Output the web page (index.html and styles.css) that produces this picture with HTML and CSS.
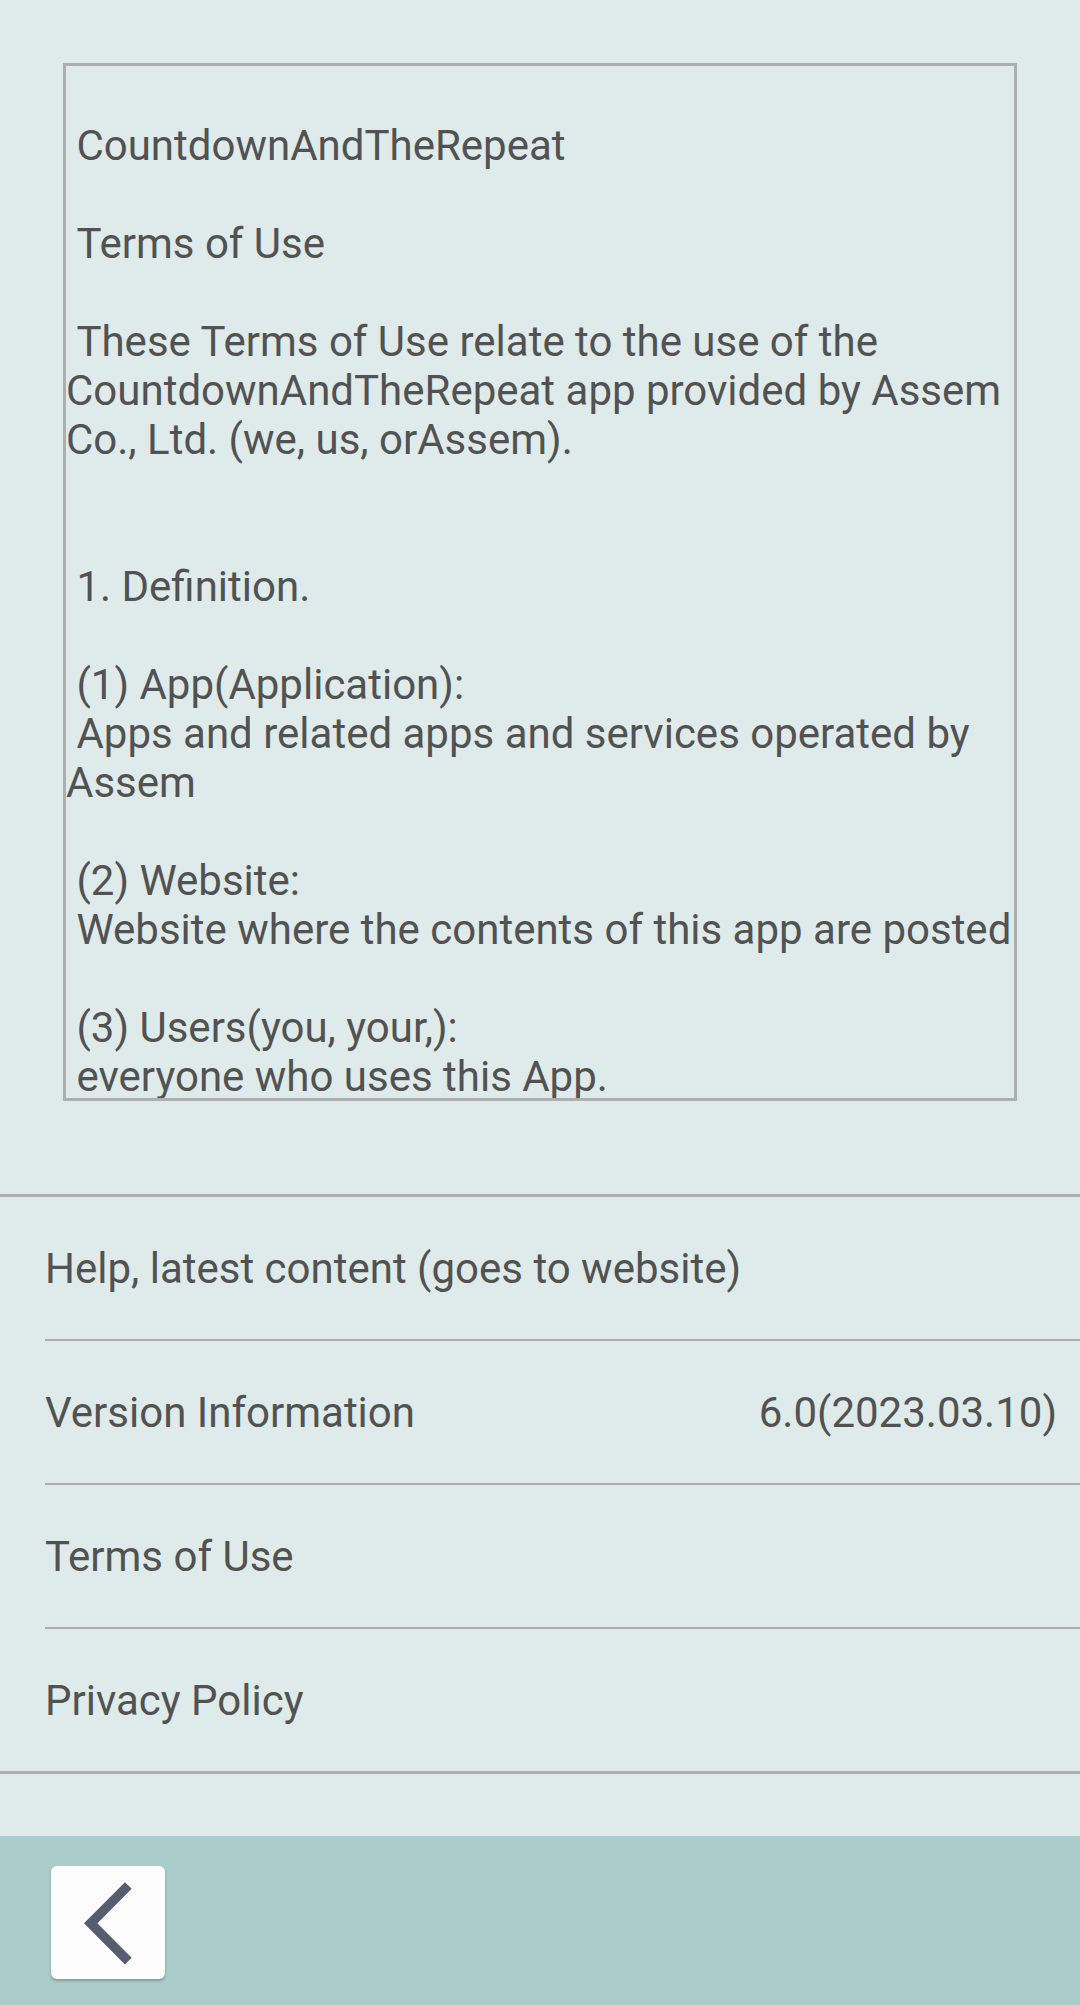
FILE: index.html
```html
<!DOCTYPE html>
<html lang="en">
<head>
    <meta charset="UTF-8">
    <meta name="viewport" content="width=device-width, initial-scale=1.0">
    <title>Settings</title>
    <link rel="stylesheet" href="styles.css">
</head>
<body>
    <div class="page">
        <div class="terms-box">
            <div class="terms-text">
 CountdownAndTheRepeat

 Terms of Use

 These Terms of Use relate to the use of the CountdownAndTheRepeat app provided by Assem Co., Ltd. (we, us, orAssem).


 1. Definition.

 (1) App(Application):
 Apps and related apps and services operated by Assem

 (2) Website:
 Website where the contents of this app are posted

 (3) Users(you, your,):
 everyone who uses this App.</div>
        </div>

        <ul class="menu">
            <li class="menu-item">
                <span>Help, latest content (goes to website)</span>
            </li>
            <li class="menu-item">
                <span>Version Information</span>
                <span class="menu-value">6.0(2023.03.10)</span>
            </li>
            <li class="menu-item">
                <span>Terms of Use</span>
            </li>
            <li class="menu-item">
                <span>Privacy Policy</span>
            </li>
        </ul>

        <div class="toolbar">
            <button class="back-btn" aria-label="Back">
                <svg width="114" height="113" viewBox="0 0 114 113">
                    <path d="M77.3 19.5 L39.7 57.3 L77.3 95.2" fill="none" stroke="#565d70" stroke-width="9.5" stroke-linejoin="miter"/>
                </svg>
            </button>
        </div>
    </div>
</body>
</html>
```

FILE: styles.css
```css
body {
    margin: 0;
    padding: 0;
    background-color: #deebea;
    font-family: 'Roboto', 'Noto Sans', sans-serif;
    color: #525252;
}

.page {
    display: flex;
    flex-direction: column;
    min-height: 100vh;
}

.terms-box {
    margin: 63px 63px 0 63px;
    height: 1038px;
    box-sizing: border-box;
    border: 3px solid #abafaf;
    overflow: hidden;
}

.terms-text {
    white-space: pre-wrap;
    font-size: 42px;
    line-height: 49px;
    padding-top: 6px;
}

.menu {
    list-style: none;
    margin: 93px 0 0 0;
    padding: 0;
    border-top: 3px solid #abafaf;
    border-bottom: 3px solid #abafaf;
}

.menu-item {
    display: flex;
    justify-content: space-between;
    align-items: center;
    height: 142px;
    margin-left: 45px;
    padding-right: 23px;
    font-size: 42px;
    border-bottom: 2px solid #abafaf;
}

.menu-item:last-child {
    border-bottom: none;
}

.toolbar {
    margin-top: auto;
    height: 169px;
    box-sizing: border-box;
    background-color: #aacdcc;
    padding: 30px 0 0 51px;
}

.back-btn {
    display: block;
    width: 114px;
    height: 113px;
    padding: 0;
    border: none;
    border-radius: 6px;
    background-color: #fcfcfd;
    box-shadow: 0 2px 3px rgba(0, 0, 0, 0.25);
    cursor: pointer;
}

.back-btn svg {
    display: block;
}
```
